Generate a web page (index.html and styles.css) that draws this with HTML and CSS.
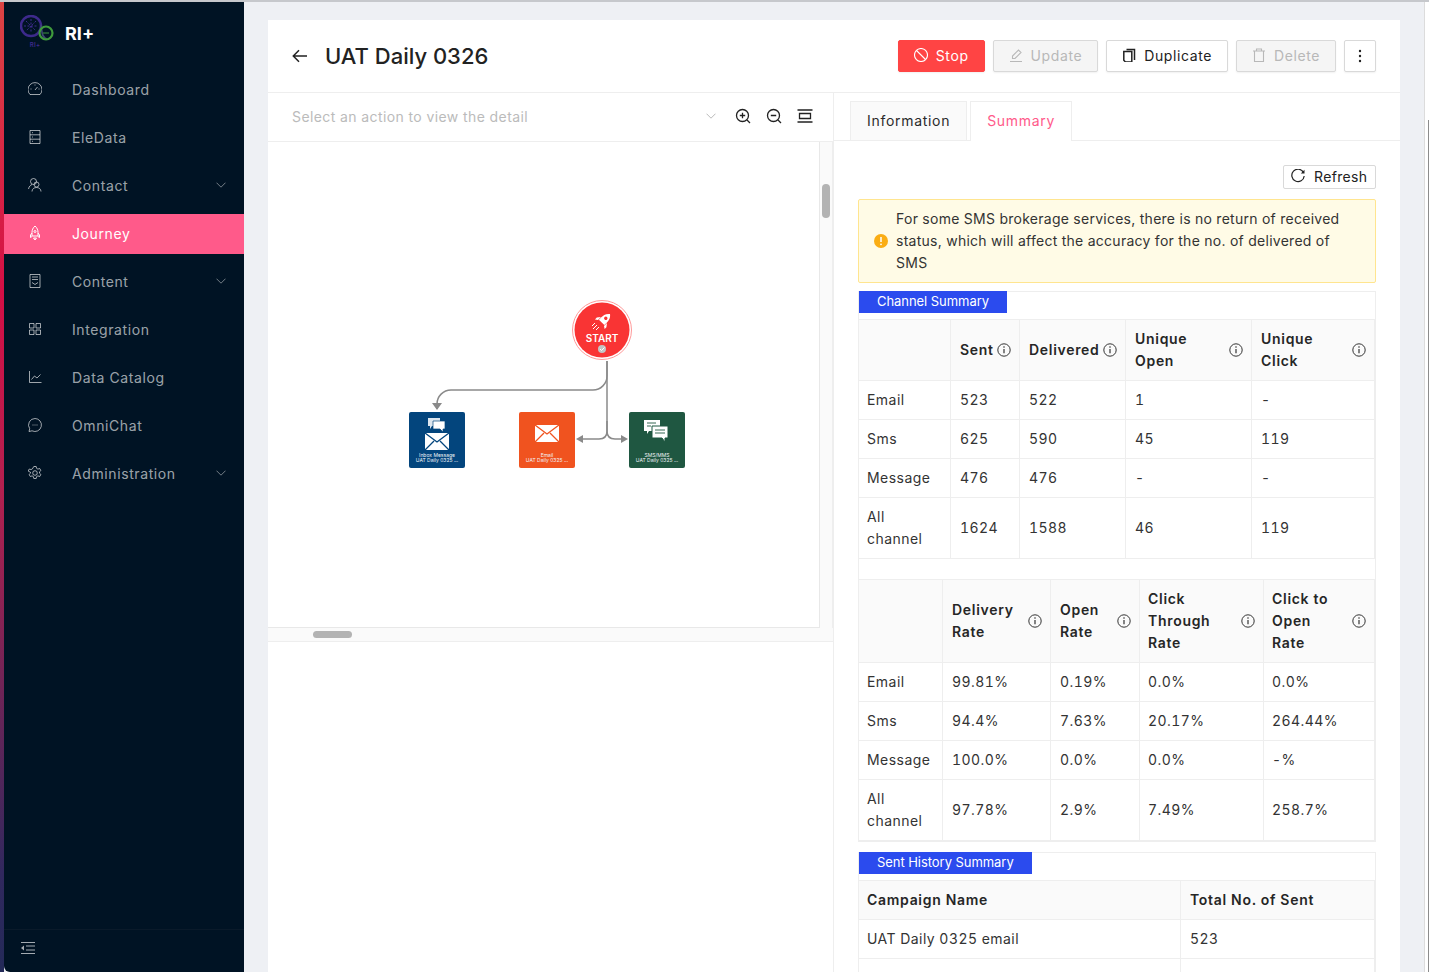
FILE: index.html
```html
<!DOCTYPE html>
<html lang="en">
<head>
  <meta charset="UTF-8">
  <meta name="viewport" content="width=device-width, initial-scale=1.0">
  <title>UAT Daily 0326</title>
  <link rel="stylesheet" href="styles.css">
</head>
<body>
  <svg class="defs" width="0" height="0">
    <symbol id="info" viewBox="0 0 14 14">
      <circle cx="7" cy="7" r="6.2" fill="none" stroke="#333" stroke-width="1"/>
      <path d="M7 6v4.200" stroke="#333" stroke-width="1.200" fill="none"/>
      <circle cx="7" cy="4" r=".8" fill="#333"/>
    </symbol>
    <symbol id="chev" viewBox="0 0 10 6">
      <path d="M.5.7 5 5.200 9.500.7" fill="none" stroke="currentColor" stroke-width="1"/>
    </symbol>
  </svg>

  <div class="edge"></div>

  <aside class="sidebar">
    <div class="logo">
      <svg width="34" height="38" viewBox="0 0 34 38">
        <circle cx="11" cy="11" r="10" fill="none" stroke="#3d2a8c" stroke-width="2.500"/>
        <path d="M11 4v14M4 11h14M6 6l10 10M16 6 6 16" stroke="#3d2a8c" stroke-width="1" stroke-dasharray="2 1.500"/>
        <path d="M21 10c1 4 0 13 6 14" fill="none" stroke="#3d4a70" stroke-width="1.500"/>
        <circle cx="26" cy="18" r="6.500" fill="none" stroke="#3f9a3c" stroke-width="2.200"/>
        <path d="M23 18h6" stroke="#3f9a3c" stroke-width="1"/>
        <text x="15" y="32" class="logo-mini">RI+</text>
      </svg>
      <span class="logo-name">RI+</span>
    </div>
    <nav class="nav">
      <a class="nav-item">
        <svg class="nav-icon" viewBox="1 1 14 14"><path d="M3 13.500a7 7 0 1 1 10 0zM8 9l2.500-3M3.500 8h1M11.500 8h1M8 3.500v1"/></svg>
        <span>Dashboard</span>
      </a>
      <a class="nav-item">
        <svg class="nav-icon" viewBox="1 1 14 14"><path d="M3 1.500h10v13H3zM3 5.800h10M3 10.200h10M5 3.700h1M5 8h1M5 12.300h1"/></svg>
        <span>EleData</span>
      </a>
      <a class="nav-item">
        <svg class="nav-icon" viewBox="1 1 14 14"><circle cx="6.500" cy="4.500" r="3"/><circle cx="9.500" cy="7.500" r="2.500"/><path d="M1.500 12c.5-2.500 2-4 3.500-4.500M5 14.500c0-2.500 2-4 4.500-4s4.500 1.500 4.500 4"/></svg>
        <span>Contact</span>
        <svg class="nav-chev"><use href="#chev"/></svg>
      </a>
      <a class="nav-item active">
        <svg class="nav-icon" viewBox="1 1 14 14"><path d="M8 1c2.200 2 3 4 3 6.500V11H5V7.500C5 5 5.800 3 8 1zM5 8 3.500 10v2.500L5 11.500M11 8l1.500 2v2.500L11 11.500M6.500 13h3L8 15z"/><circle cx="8" cy="6.500" r="1"/></svg>
        <span>Journey</span>
      </a>
      <a class="nav-item">
        <svg class="nav-icon" viewBox="1 1 14 14"><path d="M3 1.500h10v13H3zM5 4h6M5 6.500h6M5 9.500l3 2 3-2"/></svg>
        <span>Content</span>
        <svg class="nav-chev"><use href="#chev"/></svg>
      </a>
      <a class="nav-item">
        <svg class="nav-icon" viewBox="1 1 14 14"><path d="M2.500 2.500h4.500V7H2.500zM9 2.500h4.500V7H9zM2.500 9H7v4.500H2.500zM9 9h4.500v4.500H9z"/></svg>
        <span>Integration</span>
      </a>
      <a class="nav-item">
        <svg class="nav-icon" viewBox="1 1 14 14"><path d="M2.500 2v11.500h12M4.500 10.500l3-3.500 2.500 2 3.500-3.500"/></svg>
        <span>Data Catalog</span>
      </a>
      <a class="nav-item">
        <svg class="nav-icon" viewBox="1 1 14 14"><path d="M8 1.500a6.500 6.500 0 1 1-3 12.300l-3 .7.700-2.800A6.500 6.500 0 0 1 8 1.500zM5.500 8h1M7.500 8h1M9.500 8h1"/></svg>
        <span>OmniChat</span>
      </a>
      <a class="nav-item">
        <svg class="nav-icon" viewBox="1 1 14 14"><path d="m6.800 1.500h2.400l.4 1.900 1.300.7 1.800-.6 1.200 2-1.400 1.300v1.400l1.400 1.300-1.200 2-1.800-.6-1.300.7-.4 1.900H6.800l-.4-1.900-1.300-.7-1.800.6-1.200-2 1.400-1.300V7.300L1.100 6l1.200-2 1.800.6 1.300-.7z"/><circle cx="8" cy="8" r="2.300"/></svg>
        <span>Administration</span>
        <svg class="nav-chev"><use href="#chev"/></svg>
      </a>
    </nav>
    <div class="collapse">
      <svg width="16" height="14" viewBox="0 0 16 14"><path d="M1 1.500h14M6 5h9M6 9h9M1 12.500h14" stroke="#a4abb2" stroke-width="1.200" fill="none"/><path d="M4 4.500v5L1 7z" fill="#a4abb2"/></svg>
    </div>
  </aside>

  <main class="main">
    <div class="card">
      <header class="head">
        <svg class="back" width="16" height="14" viewBox="0 0 16 14"><path d="M15 7H1.500M7 1.300 1.300 7 7 12.700" fill="none" stroke="#222" stroke-width="1.500"/></svg>
        <h1 class="title">UAT Daily 0326</h1>
        <div class="actions">
          <button class="btn btn-stop">
            <svg class="btn-icon" viewBox="1 1 14 14"><circle cx="8" cy="8" r="6.500"/><path d="m3.500 3.500 9 9"/></svg>Stop
          </button>
          <button class="btn btn-off">
            <svg class="btn-icon" viewBox="1 1 14 14"><path d="M2 14.500h12M4.500 11.500v-2.500l6-6 2.500 2.500-6 6z"/></svg>Update
          </button>
          <button class="btn">
            <svg class="btn-icon" viewBox="1 1 14 14"><path d="M5.500 2.500h8v10.500M2.800 4.500h8V15H4.500l-1.700-1.700z" stroke-width="1.500"/></svg>Duplicate
          </button>
          <button class="btn btn-off">
            <svg class="btn-icon" viewBox="1 1 14 14"><path d="M2 4h12M5.500 4V2h5v2M3.500 4v10.500h9V4"/></svg>Delete
          </button>
          <button class="btn btn-more">
            <svg width="4" height="14" viewBox="0 0 4 14"><circle cx="2" cy="2" r="1.200" fill="#222"/><circle cx="2" cy="7" r="1.200" fill="#222"/><circle cx="2" cy="12" r="1.200" fill="#222"/></svg>
          </button>
        </div>
      </header>

      <div class="split">
        <section class="flow">
          <div class="flow-bar">
            <span class="flow-select">Select an action to view the detail</span>
            <svg class="flow-chev"><use href="#chev"/></svg>
            <div class="flow-tools">
              <svg class="tool" viewBox="0 0 16 16"><circle cx="7.500" cy="7.500" r="6"/><path d="m12 12 3 3M4.800 7.500h5.400M7.500 4.800v5.400"/></svg>
              <svg class="tool" viewBox="0 0 16 16"><circle cx="7.500" cy="7.500" r="6"/><path d="m12 12 3 3M4.800 7.500h5.400"/></svg>
              <svg class="tool" viewBox="0 0 16 16"><path d="M.500 2h15M.500 14h15M2.500 5.500h11v5h-11z"/></svg>
            </div>
          </div>
          <div class="flow-body">
            <div class="flow-view">
              <div class="canvas">
                <svg class="diagram" width="552" height="486" viewBox="0 1 552 486">
                  <g fill="none" stroke="#8a8a8a" stroke-width="1.500">
                    <path d="M339 220v15a14 14 0 0 1-14 14H183a14 14 0 0 0-14 14v5"/>
                    <path d="M339 220v70q0 8-8 8H314"/>
                    <path d="M339 280v10q0 8 8 8h7"/>
                  </g>
                  <path d="m164 262 5 7 5-7zM308 298l7-4v8zM360 298l-7-4v8z" fill="#8a8a8a"/>

                  <circle cx="334" cy="189" r="29.500" fill="#fff" stroke="#ff9a9a" stroke-width="1"/>
                  <circle cx="334" cy="189" r="27.500" fill="#f93434"/>
                  <g transform="translate(336 179) rotate(45) scale(.85)">
                    <path d="M0-10c4 3 4.500 7 4.500 10v4h-9V0c0-3 .5-7 4.500-10z" fill="#fff"/>
                    <path d="M-5 0-8 4v3l3-2zM5 0l3 4v3L5 5z" fill="#fff"/>
                    <circle cx="0" cy="-3" r="2" fill="#f93434"/>
                  </g>
                  <path d="m327 182-3 3M329 184l-4 4M331 186l-3 3" stroke="#fff" stroke-width="1" fill="none"/>
                  <text x="334" y="201" class="start-text">START</text>
                  <circle cx="334" cy="208" r="4" fill="#c4c4c4"/>
                  <path d="m332 208 1.500 1.500 3-3" stroke="#fff" fill="none"/>

                  <rect x="141" y="271" width="56" height="56" rx="2" fill="#03457d"/>
                  <path d="M160 277h12v8h-8l-2 3v-3h-2z" fill="#dce6ef"/>
                  <path d="M165 280h12v8h-2v3l-3-3h-7z" fill="#fff" stroke="#03457d" stroke-width=".7"/>
                  <rect x="157" y="292" width="24" height="17" fill="#fff"/>
                  <path d="m157 292 12 9 12-9M157 309l9-9M181 309l-9-9" fill="none" stroke="#03457d" stroke-width="1.300"/>
                  <text x="169" y="316" class="node-name">Inbox Message</text>
                  <text x="169" y="321" class="node-sub">UAT Daily 0325 ...</text>

                  <rect x="251" y="271" width="56" height="56" rx="2" fill="#f0531f"/>
                  <rect x="267" y="284" width="24" height="17" fill="#fff"/>
                  <path d="m267 284 12 9 12-9M267 301l9-9M291 301l-9-9" fill="none" stroke="#f0531f" stroke-width="1.300"/>
                  <text x="279" y="316" class="node-name">Email</text>
                  <text x="279" y="321" class="node-sub">UAT Daily 0325 ...</text>

                  <rect x="361" y="271" width="56" height="56" rx="2" fill="#1f5741"/>
                  <path d="M376 279h16v11h-11l-2 3v-3h-3z" fill="#fff"/>
                  <path d="M384 285h16v12h-3v4l-3-4h-10z" fill="#fff" stroke="#1f5741" stroke-width="1"/>
                  <path d="M379 282h9M379 285h4M387 289h10M387 292h10" stroke="#1f5741" stroke-width=".9"/>
                  <text x="389" y="316" class="node-name">SMS/MMS</text>
                  <text x="389" y="321" class="node-sub">UAT Daily 0325 ...</text>
                </svg>
              </div>
              <div class="scroll-y"><div class="thumb-y"></div></div>
            </div>
            <div class="scroll-x"><div class="thumb-x"></div></div>
          </div>
        </section>

        <section class="detail">
          <div class="tabs">
            <div class="tab">Information</div>
            <div class="tab tab-on">Summary</div>
          </div>
          <div class="detail-body">
            <div class="refresh-row">
              <button class="btn-refresh">
                <svg width="14" height="14" viewBox="0 0 14 14"><path d="M12.500 3.500A6.200 6.200 0 1 0 13.200 7" fill="none" stroke="#222" stroke-width="1.200"/><path d="M13.500.8v3.700H9.800z" fill="#222"/></svg>Refresh
              </button>
            </div>
            <div class="alert">
              <svg class="alert-icon" viewBox="0 0 14 14"><circle cx="7" cy="7" r="7" fill="#faad14"/><path d="M7 3v5" stroke="#fff" stroke-width="1.500"/><circle cx="7" cy="10.300" r=".9" fill="#fff"/></svg>
              <p>For some SMS brokerage services, there is no return of received<br>status, which will affect the accuracy for the no. of delivered of<br>SMS</p>
            </div>

            <div class="box">
              <div class="box-label">Channel Summary</div>
              <table class="grid">
                <colgroup><col class="c1-a"><col class="c1-b"><col class="c1-c"><col class="c1-d"><col class="c1-e"></colgroup>
                <tr>
                  <th></th>
                  <th><div class="th-in"><span>Sent</span><svg class="i"><use href="#info"/></svg></div></th>
                  <th><div class="th-in"><span>Delivered</span><svg class="i"><use href="#info"/></svg></div></th>
                  <th><div class="th-in"><span>Unique<br>Open</span><svg class="i"><use href="#info"/></svg></div></th>
                  <th><div class="th-in"><span>Unique<br>Click</span><svg class="i"><use href="#info"/></svg></div></th>
                </tr>
                <tr><td>Email</td><td>523</td><td>522</td><td>1</td><td>-</td></tr>
                <tr><td>Sms</td><td>625</td><td>590</td><td>45</td><td>119</td></tr>
                <tr><td>Message</td><td>476</td><td>476</td><td>-</td><td>-</td></tr>
                <tr><td>All<br>channel</td><td>1624</td><td>1588</td><td>46</td><td>119</td></tr>
              </table>
              <table class="grid grid-second">
                <colgroup><col class="c2-a"><col class="c2-b"><col class="c2-c"><col class="c2-d"><col class="c2-e"></colgroup>
                <tr>
                  <th></th>
                  <th><div class="th-in"><span>Delivery<br>Rate</span><svg class="i"><use href="#info"/></svg></div></th>
                  <th><div class="th-in"><span>Open<br>Rate</span><svg class="i"><use href="#info"/></svg></div></th>
                  <th><div class="th-in"><span>Click<br>Through<br>Rate</span><svg class="i"><use href="#info"/></svg></div></th>
                  <th><div class="th-in"><span>Click to<br>Open<br>Rate</span><svg class="i"><use href="#info"/></svg></div></th>
                </tr>
                <tr><td>Email</td><td>99.81%</td><td>0.19%</td><td>0.0%</td><td>0.0%</td></tr>
                <tr><td>Sms</td><td>94.4%</td><td>7.63%</td><td>20.17%</td><td>264.44%</td></tr>
                <tr><td>Message</td><td>100.0%</td><td>0.0%</td><td>0.0%</td><td>-%</td></tr>
                <tr><td>All<br>channel</td><td>97.78%</td><td>2.9%</td><td>7.49%</td><td>258.7%</td></tr>
              </table>
            </div>

            <div class="box box-history">
              <div class="box-label">Sent History Summary</div>
              <table class="grid">
                <colgroup><col class="c3-a"><col class="c3-b"></colgroup>
                <tr><th>Campaign Name</th><th>Total No. of Sent</th></tr>
                <tr><td>UAT Daily 0325 email</td><td>523</td></tr>
                <tr><td></td><td></td></tr>
              </table>
            </div>
          </div>
        </section>
      </div>
    </div>
  </main>

  <div class="side-strip"><div class="strip-bar"></div></div>
</body>
</html>
```

FILE: styles.css
```css
* {
  box-sizing: border-box;
}
html, body {
  height: 100%;
}
body {
  margin: 0;
  display: flex;
  height: 972px;
  overflow: hidden;
  background: #eef0f4;
  border-top: 2px solid #c6c8cc;
  font-family: Inter, "Open Sans", sans-serif;
  font-size: 14px;
  letter-spacing: .35px;
  color: #2b2b2b;
}
.defs {
  position: absolute;
}
.edge {
  width: 4px;
  flex: none;
  background: linear-gradient(180deg, #dc4444 0, #d40f45 30%, #b3204f 50%, #30285e 90%, #232a58 100%);
}

/* sidebar */
.sidebar {
  width: 240px;
  flex: none;
  display: flex;
  flex-direction: column;
  background: #001324;
  border-bottom-left-radius: 6px;
}
.logo {
  height: 68px;
  display: flex;
  align-items: center;
  padding: 0 0 4px 16px;
  gap: 11px;
}
.logo-mini {
  font-size: 6px;
  fill: #3d2a8c;
  text-anchor: middle;
  font-weight: 600;
}
.logo-name {
  color: #fff;
  font-size: 18px;
  font-weight: 700;
  letter-spacing: 0;
  padding-bottom: 2px;
}
.nav {
  flex: 1;
  display: flex;
  flex-direction: column;
  gap: 8px;
}
.nav-item {
  height: 40px;
  display: flex;
  align-items: center;
  padding: 0 0 2px 24px;
  color: rgba(255, 255, 255, .62);
  font-size: 14px;
  letter-spacing: .6px;
}
.nav-item.active {
  background: #ff5a8a;
  color: #fff;
}
.nav-icon {
  width: 14px;
  height: 14px;
  margin-right: 30px;
  fill: none;
  stroke: currentColor;
  stroke-width: 1;
}
.nav-chev {
  width: 10px;
  height: 6px;
  margin-left: auto;
  margin-right: 18px;
  color: rgba(255, 255, 255, .45);
}
.collapse {
  height: 43px;
  border-top: 1px solid #0a1a2a;
  padding: 11px 0 0 16px;
}

/* main card */
.main {
  flex: 1;
  padding: 18px 24px 0 24px;
  min-width: 0;
}
.card {
  background: #fff;
  height: 100%;
  display: flex;
  flex-direction: column;
}
.side-strip {
  width: 5px;
  flex: none;
  background: #fff;
  border-left: 1px solid #dcdcdc;
  padding: 118px 0 0 3px;
}
.strip-bar {
  width: 1px;
  height: 100%;
  background: #8c8c8c;
}
.head {
  height: 73px;
  flex: none;
  display: flex;
  align-items: center;
  padding: 0 24px;
  border-bottom: 1px solid #eee;
}
.back {
  margin-right: 17px;
}
.title {
  margin: 0;
  font-size: 22px;
  font-weight: 500;
  letter-spacing: 0;
  color: #222;
}
.actions {
  margin-left: auto;
  display: flex;
  gap: 8px;
}
.btn {
  height: 32px;
  padding: 0 15px 2px;
  display: flex;
  align-items: center;
  gap: 8px;
  background: #fff;
  border: 1px solid #d9d9d9;
  border-radius: 2px;
  box-shadow: 0 1px 2px rgba(0, 0, 0, .06);
  font: inherit;
  letter-spacing: .6px;
  color: #222;
}
.btn-icon {
  width: 14px;
  height: 14px;
  fill: none;
  stroke: currentColor;
  stroke-width: 1.100;
}
.btn-stop {
  background: #ff4444;
  border-color: #ff4444;
  color: #fff;
}
.btn-off {
  background: #f5f5f5;
  color: #b8b8b8;
}
.btn-more {
  width: 32px;
  padding: 0;
  justify-content: center;
}

.split {
  flex: 1;
  display: flex;
  min-height: 0;
}

/* left panel */
.flow {
  width: 566px;
  flex: none;
  border-right: 1px solid #eee;
}
.flow-bar {
  height: 49px;
  display: flex;
  align-items: center;
  padding: 0 20px 2px 24px;
  border-bottom: 1px solid #eee;
}
.flow-select {
  flex: 1;
  color: #bbb;
  letter-spacing: .4px;
}
.flow-chev {
  width: 10px;
  height: 6px;
  color: #bbb;
  margin-right: 19px;
}
.flow-tools {
  display: flex;
  gap: 15px;
}
.tool {
  width: 16px;
  height: 16px;
  fill: none;
  stroke: #222;
  stroke-width: 1.300;
}
.flow-view {
  display: flex;
  height: 486px;
}
.canvas {
  width: 552px;
  height: 486px;
  border-right: 1px solid #e8e8e8;
  border-bottom: 1px solid #e8e8e8;
  overflow: hidden;
}
.diagram {
  display: block;
}
.start-text {
  font-size: 10px;
  font-weight: 600;
  fill: #fff;
  text-anchor: middle;
  letter-spacing: 0;
}
.node-name,
.node-sub {
  font-size: 5px;
  fill: #f0f4f7;
  text-anchor: middle;
  letter-spacing: 0;
}
.scroll-y {
  width: 13px;
  background: #fafafa;
  border-right: 1px solid #eee;
  padding: 42px 0 0 2px;
}
.thumb-y {
  width: 8px;
  height: 34px;
  background: #b3b3b3;
  border-radius: 4px;
}
.scroll-x {
  width: 565px;
  height: 14px;
  background: #fafafa;
  border-bottom: 1px solid #eee;
  padding: 3px 0 0 45px;
}
.thumb-x {
  width: 39px;
  height: 7px;
  background: #b3b3b3;
  border-radius: 4px;
}

/* right panel */
.detail {
  flex: 1;
  min-width: 0;
}
.tabs {
  display: flex;
  gap: 3px;
  padding: 8px 0 0 16px;
  height: 48px;
  border-bottom: 1px solid #eee;
}
.tab {
  height: 39px;
  padding: 0 16px 2px;
  display: flex;
  align-items: center;
  background: #fafafa;
  border: 1px solid #eee;
  border-bottom: none;
  letter-spacing: .7px;
}
.tab-on {
  height: 40px;
  background: #fff;
  color: #ff5a8a;
}
.detail-body {
  padding: 24px 24px 0 24px;
}
.refresh-row {
  display: flex;
  justify-content: flex-end;
  margin-bottom: 10px;
}
.btn-refresh {
  height: 24px;
  width: 93px;
  padding: 0 7px 2px;
  display: flex;
  align-items: center;
  gap: 9px;
  background: #fff;
  border: 1px solid #d9d9d9;
  border-radius: 2px;
  font: inherit;
  letter-spacing: inherit;
  color: #222;
}
.alert {
  display: flex;
  align-items: center;
  gap: 8px;
  height: 84px;
  padding: 0 15px;
  margin-bottom: 8px;
  background: #fffbe6;
  border: 1px solid #ffe58f;
  border-radius: 2px;
}
.alert p {
  margin: 0;
  line-height: 22px;
  letter-spacing: .26px;
  color: #333;
}
.alert-icon {
  width: 14px;
  height: 14px;
  flex: none;
}

/* tables */
.box {
  border: 1px solid #eee;
}
.box-history {
  margin-top: 10px;
  border-bottom: none;
}
.box-label {
  width: max-content;
  height: 22px;
  line-height: 20px;
  padding: 0 18px;
  margin: -1px 0 6px 0;
  background: #2b4bee;
  color: #fff;
  font-size: 13px;
  letter-spacing: -.05px;
}
.grid {
  width: 516px;
  table-layout: fixed;
  border-collapse: separate;
  border-spacing: 0;
  line-height: 22px;
}
.grid-second {
  margin-top: 20px;
}
.grid th,
.grid td {
  padding: 8px;
  border-top: 1px solid #eee;
  border-right: 1px solid #eee;
  text-align: left;
  height: 39px;
}
.grid tr:last-child td {
  border-bottom: 1px solid #eee;
}
.grid th:not(:first-child),
.grid td:not(:first-child) {
  padding-left: 9px;
}
.grid-second :is(th, td):nth-child(n+4) {
  padding-left: 8px;
}
.grid th {
  background: #fafafa;
  font-weight: 600;
  letter-spacing: .7px;
  color: #262626;
}
.grid td {
  color: #333;
  letter-spacing: .45px;
  font-variant-numeric: tabular-nums;
}
.th-in {
  display: flex;
  align-items: center;
  justify-content: space-between;
}
.i {
  width: 14px;
  height: 14px;
  flex: none;
}
.c1-a { width: 92px; }
.c1-b { width: 69px; }
.c1-c { width: 106px; }
.c1-d { width: 126px; }
.c1-e { width: 123px; }
.c2-a { width: 84px; }
.c2-b { width: 108px; }
.c2-c { width: 89px; }
.c2-d { width: 124px; }
.c2-e { width: 111px; }
.c3-a { width: 322px; }
.c3-b { width: 194px; }
```
